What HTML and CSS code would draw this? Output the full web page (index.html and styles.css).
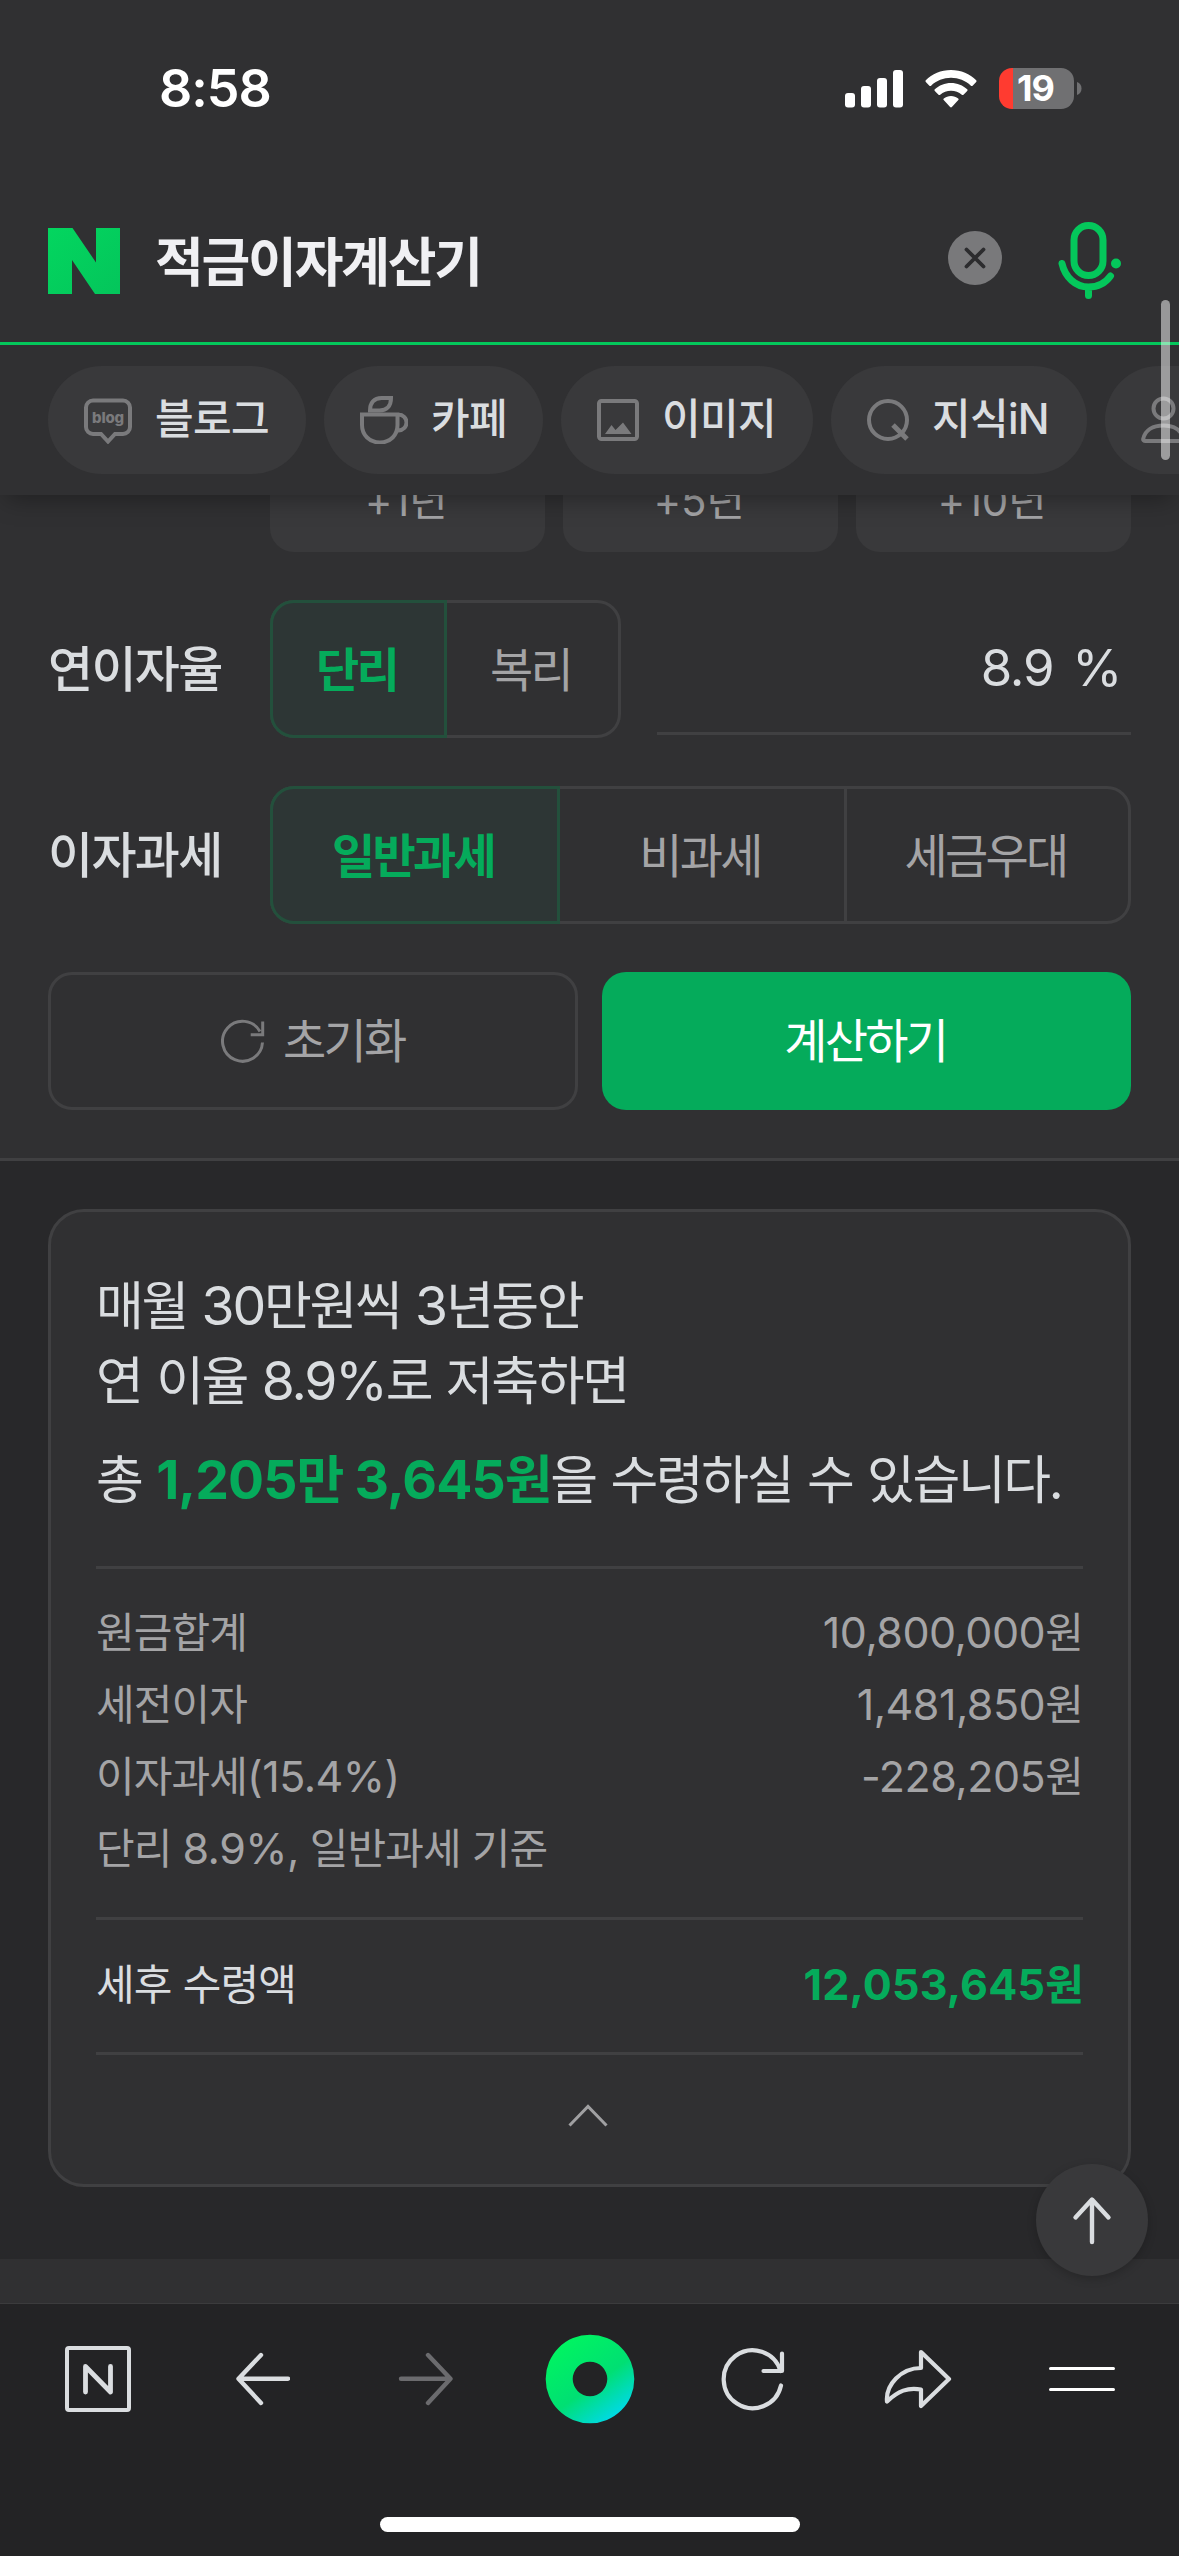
FILE: index.html
```html
<!DOCTYPE html>
<html lang="ko">
<head>
<meta charset="utf-8">
<title>적금이자계산기</title>
<link rel="stylesheet" href="styles.css">
</head>
<body>
<div class="phone">
  <header class="top">
    <div class="status">
      <span class="time">8:58</span>
      <div class="status-icons">
        <svg width="58" height="38" viewBox="0 0 58 38" fill="#fff"><rect x="0" y="23" width="10" height="14.500" rx="3"/><rect x="16" y="16" width="10" height="21.500" rx="3"/><rect x="32" y="8" width="10" height="29.500" rx="3"/><rect x="48" y="0" width="10" height="37.500" rx="3"/></svg>
        <svg class="wifi" width="52" height="38" viewBox="0 0 52 38" fill="#fff"><path d="M26 0C16 0 7 4 .8 10.300q-.8.800 0 1.700l3.600 3.700q.8.800 1.700 0C11.500 10.600 18.500 7.800 26 7.800s14.500 2.800 19.900 7.900q.9.800 1.700 0l3.600-3.700q.8-.9 0-1.700C45 4 36 0 26 0z"/><path d="M26 13c-6.200 0-11.900 2.400-16.200 6.300q-.9.800 0 1.700l3.700 3.700q.8.800 1.700 0c2.900-2.500 6.700-4 10.800-4s7.900 1.500 10.800 4q.9.800 1.700 0l3.700-3.700q.9-.9 0-1.700C37.900 15.400 32.200 13 26 13z"/><path d="M26 26c-2.700 0-5.200.9-7.200 2.400q-1 .8-.1 1.700l6.400 6.900q.9.900 1.800 0l6.400-6.900q.9-.9-.1-1.700C31.200 26.900 28.700 26 26 26z"/></svg>
        <div class="battery"><span class="battery-body">19</span><svg width="5" height="13" viewBox="0 0 5 13"><path d="M0 0v13C3 12 4.500 9.500 4.500 6.500S3 1 0 0z" fill="#707072"/></svg></div>
      </div>
    </div>
    <div class="search">
      <svg class="logo" width="72" height="66" viewBox="0 0 72 66"><defs><linearGradient id="lg" x1="0" y1="0" x2="1" y2="1"><stop offset="0" stop-color="#03d65f"/><stop offset="1" stop-color="#04c55b"/></linearGradient></defs><path d="M0 0h24.500L48 34.500V0h24v66H47L24 32v34H0z" fill="url(#lg)"/></svg>
      <span class="query">적금이자계산기</span>
      <svg class="clear" width="54" height="54" viewBox="0 0 54 54"><circle cx="27" cy="27" r="27" fill="#79797b"/><path d="M18.500 18.500l17 17M35.500 18.500l-17 17" stroke="#2c2c2e" stroke-width="3.800" stroke-linecap="round"/></svg>
      <svg class="mic" width="64" height="78" viewBox="0 0 64 78" fill="none" stroke="#04c75b" stroke-width="7" stroke-linecap="round"><rect x="16" y="4.500" width="29" height="50" rx="14.500"/><path d="M4 42.500C7 56 17.500 66 30.500 66 40 66 47.500 62 52.500 55M30.500 66v8.500"/><circle cx="58" cy="42.500" r="5" fill="#04c75b" stroke="none"/></svg>
    </div>
    <nav class="tabs">
      <a class="tab blog"><svg width="48" height="48" viewBox="0 0 48 48" fill="none" stroke="#7a7a7c" stroke-width="4"><path d="M9 4.500h30a7 7 0 0 1 7 7V31a7 7 0 0 1-7 7h-8l-7 7.500L17 38H9a7 7 0 0 1-7-7V11.500a7 7 0 0 1 7-7z"/><text class="blog-word" x="24" y="26.500" text-anchor="middle">blog</text></svg><span>블로그</span></a>
      <a class="tab cafe"><svg width="48" height="48" viewBox="0 0 48 48" fill="none" stroke="#7a7a7c" stroke-width="4"><path d="M2 18.500h35.500V29C37.500 39 30.500 46.500 20 46.500S2 39 2 29zM37 18.500h1.500a7 7 0 0 1 0 16H37"/><path d="M10 14.500c0-8 4-12.500 11.500-12.500H31c0 8-4 12.500-11.500 12.500z"/></svg><span>카페</span></a>
      <a class="tab image"><svg width="42" height="48" viewBox="0 0 42 48"><rect x="2" y="5" width="38" height="38" rx="2.500" fill="none" stroke="#7a7a7c" stroke-width="4"/><path d="M8 38l6.500-9 4 5 7.500-7.500L34.500 38z" fill="#7a7a7c"/></svg><span>이미지</span></a>
      <a class="tab kin"><svg width="42" height="48" viewBox="0 0 42 48" fill="none" stroke="#7a7a7c" stroke-width="4"><circle cx="21" cy="24" r="19"/><path d="M26 29l14 14" stroke-width="5"/></svg><span>지식iN</span></a>
      <a class="tab person"><svg width="46" height="48" viewBox="0 0 46 48" fill="none" stroke="#7a7a7c" stroke-width="4"><circle cx="22.500" cy="12.500" r="10"/><path d="M4.500 45h36c1.500 0 2-1 1.800-2C40.500 34 33 29.500 22.500 29.500S4 34 2.200 43c-.2 1 .5 2 2.300 2z"/></svg></a>
    </nav>
  </header>

  <main class="content">
    <section class="form">
      <div class="quick"><button>+1년</button><button>+5년</button><button>+10년</button></div>
      <div class="row">
        <label>연이자율</label>
        <div class="seg seg-two"><button class="on">단리</button><button>복리</button></div>
        <div class="rate"><span>8.9</span><span>%</span></div>
      </div>
      <div class="row">
        <label>이자과세</label>
        <div class="seg seg-three"><button class="on">일반과세</button><button>비과세</button><button>세금우대</button></div>
      </div>
      <div class="actions">
        <button class="reset"><svg width="44" height="44" viewBox="0 0 44 44" fill="none" stroke="#7a7a7c" stroke-width="3"><path d="M41.500 23.500A20 20 0 1 1 39 12.500M41.700 2.500v13.300h-12"/></svg><span>초기화</span></button>
        <button class="calc"><span>계산하기</span></button>
      </div>
    </section>
    <section class="result">
      <div class="card">
        <p class="lead">매월 <span class="num">30</span>만원씩 <span class="num">3</span>년동안<br>연 이율 <span class="num">8.9%</span>로 저축하면</p>
        <p class="lead sum">총 <strong><span class="num">1,205</span>만 <span class="num">3,645</span>원</strong>을 수령하실 수 있습니다.</p>
        <dl class="detail">
          <div><dt>원금합계</dt><dd><span class="num">10,800,000</span>원</dd></div>
          <div><dt>세전이자</dt><dd><span class="num">1,481,850</span>원</dd></div>
          <div><dt>이자과세<span class="num">(15.4%)</span></dt><dd><span class="num">-228,205</span>원</dd></div>
          <div><dt>단리 <span class="num">8.9%,</span> 일반과세 기준</dt></div>
        </dl>
        <div class="total"><span>세후 수령액</span><strong><span class="num">12,053,645</span>원</strong></div>
        <div class="fold"><svg width="40" height="23" viewBox="0 0 40 23" fill="none" stroke="#a0a0a2" stroke-width="3"><path d="M1.500 21.500L20 2.500l18.500 19"/></svg></div>
      </div>
    </section>
  </main>

  <nav class="bar">
    <div class="bar-icons">
      <a><svg width="66" height="66" viewBox="0 0 66 66" fill="none" stroke="#dadde0" stroke-linecap="round" stroke-linejoin="round" stroke-width="4"><rect x="2" y="2" width="62" height="62" rx="2"/><path d="M20.500 46V20.500l25 25.500V20.500" stroke-width="4.800"/></svg></a>
      <a><svg width="56" height="54" viewBox="0 0 56 54" fill="none" stroke="#dadde0" stroke-linecap="round" stroke-linejoin="round" stroke-width="4.400"><path d="M27 3L4.500 26.700 27 51M5 26.700h49"/></svg></a>
      <a><svg width="56" height="54" viewBox="0 0 56 54" fill="none" stroke="#6b6b6e" stroke-linecap="round" stroke-linejoin="round" stroke-width="4.400"><path d="M30 3l22.500 23.700L30 51M52 26.700H3"/></svg></a>
      <a><svg width="90" height="90" viewBox="0 0 90 90"><defs><linearGradient id="dot" x1=".15" y1=".05" x2=".8" y2=".95"><stop offset="0" stop-color="#00f65f"/><stop offset=".58" stop-color="#00df73"/><stop offset="1" stop-color="#00d9ee"/></linearGradient></defs><path fill="url(#dot)" fill-rule="evenodd" d="M45 .7a44.300 44.300 0 1 0 0 88.600 44.300 44.300 0 0 0 0-88.600zm0 27a17.300 17.300 0 1 1 0 34.600 17.300 17.300 0 0 1 0-34.600z"/></svg></a>
      <a><svg width="66" height="66" viewBox="0 0 66 66" fill="none" stroke="#dadde0" stroke-linecap="round" stroke-linejoin="round" stroke-width="4.200"><path d="M60 39.500A29 29 0 1 1 59.500 25"/><path d="M61 7.500V25H42.500"/></svg></a>
      <a><svg width="68" height="60" viewBox="0 0 68 60" fill="none" stroke="#dadde0" stroke-linecap="round" stroke-linejoin="round" stroke-width="4.200"><path d="M37 3l28 27-28 27V40.500C24 38 14 42 3 52.500 1.500 36 17 19 37 19z"/></svg></a>
      <a><svg width="66" height="26" viewBox="0 0 66 26" stroke="#fff" stroke-width="3" stroke-linecap="round"><path d="M1.500 2.500h63M1.500 23.500h63"/></svg></a>
    </div>
    <div class="home"></div>
  </nav>
  <a class="to-top"><svg width="40" height="50" viewBox="0 0 40 50" fill="none" stroke="#dadde0" stroke-width="4.400" stroke-linecap="round" stroke-linejoin="round"><path d="M3.500 22.500L20 4.500l16.500 18M20 5v42"/></svg></a>
  <div class="scrollbar"></div>
</div>
</body>
</html>
```
FILE: styles.css
```css
* { box-sizing: border-box; }
body { margin: 0; background: #303032; }
p, dl, dd { margin: 0; }
svg { display: block; flex: none; }
button { margin: 0; padding: 0; border: 0; background: none; color: inherit; font: inherit; line-height: 60px; letter-spacing: inherit; }

.phone {
  position: relative;
  width: 1179px;
  height: 2556px;
  display: flex;
  flex-direction: column;
  overflow: hidden;
  background: #303032;
  color: #dadde0;
  font-family: Inter, "Noto Sans CJK KR", sans-serif;
  line-height: 60px;
  white-space: nowrap;
}

/* Status bar and search */
.top { position: relative; z-index: 1; flex: none; height: 495px; background: #303032; box-shadow: 0 9px 24px -6px rgba(0, 0, 0, .36); }
.status { height: 177px; padding: 0 97px 0 159px; display: flex; justify-content: space-between; align-items: center; color: #fff; }
.time { font-size: 52px; font-weight: 600; letter-spacing: -1px; line-height: 60px; }
.status-icons { display: flex; align-items: center; }
.wifi { margin: 0 22px; }
.battery { display: flex; align-items: center; gap: 3px; margin-top: -1px; }
.battery-body {
  width: 75px; height: 41px; border-radius: 13px;
  background: linear-gradient(90deg, #ff3b30 14px, #707072 14px);
  font-size: 36px; font-weight: 700; line-height: 41px; text-align: center; letter-spacing: -1px; padding-right: 2px;
}
.search { height: 168px; padding: 0 57px 0 48px; display: flex; align-items: center; border-bottom: 3px solid #04c75b; }
.logo { margin-top: 3px; }
.query { margin: 6px 0 0 35px; flex: 1; color: #f0f0f3; font-size: 53px; font-weight: 700; letter-spacing: -2.200px; line-height: 60px; }
.clear { margin-top: -3px; }
.mic { margin: 0 0 0 56px; }

.tabs { display: flex; gap: 18px; padding: 21px 0 0 48px; }
.tab { flex: none; height: 108px; padding: 0 36px; border-radius: 54px; background: #39393b; display: flex; align-items: center; font-size: 42px; font-weight: 500; letter-spacing: -.7px; }
.tab svg { margin-right: 23px; }
.tab span { line-height: 60px; margin-top: -2px; }
.blog { width: 258px; }
.cafe { width: 219px; }
.image { width: 252px; }
.kin { width: 256px; }
.person { width: 220px; }
.blog-word { font: 800 15px Inter, sans-serif; letter-spacing: -.2px; fill: #7a7a7c; stroke: none; }

/* Calculator form */
.content { flex: none; height: 1808px; overflow: hidden; }
.form { height: 666px; border-bottom: 3px solid #404042; padding: 0 48px; }
.quick { height: 57px; padding-left: 222px; display: flex; gap: 18px; align-items: flex-end; overflow: hidden; }
.quick button { flex: 1; height: 108px; border-radius: 24px; background: #39393b; color: #a4a4a6; font-size: 42px; letter-spacing: -.3px; padding: 6px 3px 0 0; }
.row { margin-top: 48px; height: 138px; display: flex; align-items: center; }
.row label { width: 222px; font-size: 49px; font-weight: 500; letter-spacing: -1.700px; line-height: 60px; padding-top: 1px; }
.seg { height: 138px; display: flex; border: 3px solid #404042; border-radius: 24px; font-size: 47px; letter-spacing: -2.700px; color: #a4a4a6; }
.seg-two { width: 351px; }
.seg-three { width: 861px; }
.seg button { flex: 1; padding: 1px 4px 0 0; }
.seg .on { margin: -3px 0 -3px -3px; border: 3px solid #23503c; border-radius: 24px 0 0 24px; background: #2d3635; color: #05ab5b; font-weight: 700; }
.seg-two .on { flex: 0 0 177px; }
.seg-three .on { flex: 0 0 290px; }
.seg-three button:nth-child(2) { flex: 0 0 284px; }
.seg-three button:nth-child(3) { border-left: 3px solid #404042; }
.rate { align-self: flex-start; margin-left: 36px; width: 474px; height: 135px; padding: 4px 10px 0 0; border-bottom: 3px solid #404042; display: flex; justify-content: flex-end; align-items: center; gap: 19px; font-size: 51px; letter-spacing: -1.300px; }
.actions { margin-top: 48px; display: grid; grid-template-columns: 1fr 1fr; gap: 24px; font-size: 47px; letter-spacing: -2.700px; }
.actions button { height: 138px; border-radius: 24px; }
.reset { border: 3px solid #404042; display: flex; justify-content: center; align-items: center; gap: 18px; color: #a4a4a6; }
.actions .calc { background: #05ab5b; color: #fff; padding-right: 2px; }

/* Result */
.result { height: 1098px; background: #28282a; padding: 48px; }
.card { height: 978px; border: 3px solid #404042; border-radius: 36px; background: #303032; padding: 57px 45px 0; }
.num { line-height: 1; }
.lead { font-size: 52px; line-height: 75px; letter-spacing: -2.400px; word-spacing: 2.500px; }
.lead .num { font-size: 53.500px; letter-spacing: -2.200px; }
.sum { margin-top: 24px; padding-bottom: 48px; border-bottom: 3px solid #404042; }
.lead strong { color: #05ab5b; font-weight: 700; }
.lead strong .num { letter-spacing: -.9px; }
.detail { height: 351px; padding-top: 28px; border-bottom: 3px solid #404042; color: #a4a4a6; font-size: 42px; line-height: 72px; letter-spacing: -.9px; }
.detail div { display: flex; justify-content: space-between; }
.detail .num { font-size: 43px; letter-spacing: -.5px; }
.total { height: 135px; padding-bottom: 3px; border-bottom: 3px solid #404042; display: flex; justify-content: space-between; align-items: center; font-size: 42px; letter-spacing: -.8px; }
.total strong { color: #05ab5b; font-weight: 700; }
.total .num { font-size: 43px; letter-spacing: .2px; }
.fold { height: 120px; padding-right: 3px; display: flex; justify-content: center; align-items: center; }

/* Browser toolbar */
.bar { flex: 1; background: #232325; border-top: 1px solid #3b3b3d; display: flex; flex-direction: column; align-items: center; }
.bar-icons { height: 149px; width: 1148px; display: flex; }
.bar-icons a { flex: 1; display: flex; justify-content: center; align-items: center; }
.home { margin-top: 64px; width: 420px; height: 15px; border-radius: 8px; background: #fff; }

.to-top { position: absolute; left: 1036px; top: 2164px; width: 112px; height: 112px; border-radius: 50%; background: #39393b; display: flex; justify-content: center; align-items: center; box-shadow: 0 3px 10px rgba(0, 0, 0, .2); }
.scrollbar { position: absolute; z-index: 2; left: 1161px; top: 300px; width: 9px; height: 160px; border-radius: 5px; background: rgba(255, 255, 255, .5); }
```
